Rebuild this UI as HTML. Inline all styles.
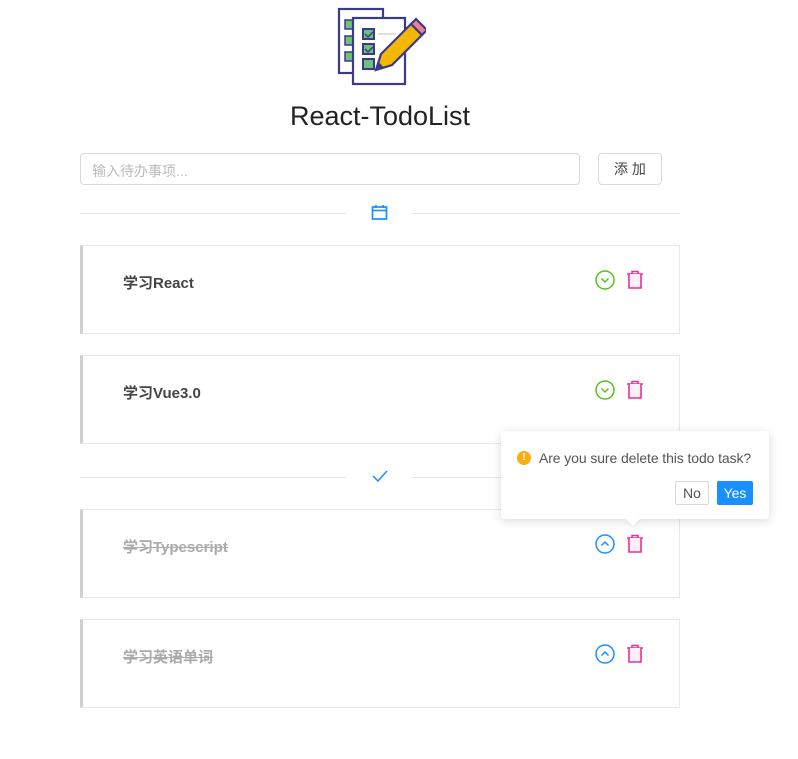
<!DOCTYPE html><html><head><meta charset="utf-8"><style>
body{margin:0;background:#fff;font-family:"Liberation Sans","Noto Sans CJK SC",sans-serif;width:798px;height:759px;position:relative;overflow:hidden}
.a{position:absolute}
.card{position:absolute;left:80px;width:596px;height:87px;border:1px solid #e8e8e8;border-left:3px solid #d0d0d0;}
.card .t{position:absolute;left:40px;top:26px;font-size:15px;font-weight:bold;color:#444}
.card.d .t{color:#aaa;text-decoration:line-through}
.ic{position:absolute;top:24px}
.line{position:absolute;height:1px;background:#e6e6e6}
</style></head><body>
<svg class="a" style="left:336px;top:6px" width="90" height="82" viewBox="0 0 90 82">
<rect x="3" y="3" width="44" height="64" fill="#fff" stroke="#3b3a8a" stroke-width="2.2"/>
<rect x="9" y="14" width="9" height="9" fill="#6cc27a" stroke="#3b3a8a" stroke-width="1.5"/><rect x="9" y="30" width="9" height="9" fill="#6cc27a" stroke="#3b3a8a" stroke-width="1.5"/><rect x="9" y="46" width="9" height="9" fill="#6cc27a" stroke="#3b3a8a" stroke-width="1.5"/>
<rect x="17" y="12" width="52" height="66" fill="#fff" stroke="#3b3a8a" stroke-width="2.2"/>
<rect x="27" y="23" width="11" height="10" fill="#6cc27a" stroke="#3b3a8a" stroke-width="2"/><rect x="27" y="38" width="11" height="10" fill="#6cc27a" stroke="#3b3a8a" stroke-width="2"/><rect x="27" y="53" width="11" height="10" fill="#6cc27a" stroke="#3b3a8a" stroke-width="2"/>
<path d="M29 28l3 3 5-5M29 43l3 3 5-5" stroke="#3b3a8a" fill="none" stroke-width="1.5"/>
<line x1="42" y1="28" x2="60" y2="28" stroke="#ddd" stroke-width="2"/>
<path d="M40 64l5-16 30-30 11 11-30 30z" fill="#f5b800" stroke="#3b3a8a" stroke-width="2.2"/>
<path d="M75 18l5-5 11 11-5 5z" fill="#e9848c" stroke="#3b3a8a" stroke-width="2.2"/>
<path d="M40 64l2.5-8 5.5 5.5z" fill="#3b3a8a"/>
</svg>
<div class="a" style="left:0;width:760px;top:101px;text-align:center;font-size:27px;color:#222">React-TodoList</div>
<div class="a" style="left:80px;top:153px;width:498px;height:30px;border:1px solid #d9d9d9;border-radius:4px"></div>
<div class="a" style="left:92px;top:161px;font-size:14px;color:#bbb">输入待办事项...</div>
<div class="a" style="left:598px;top:153px;width:62px;height:30px;border:1px solid #d9d9d9;border-radius:4px;font-size:14px;color:#444;text-align:center;line-height:30px">添 加</div>
<div class="line" style="left:80px;top:213px;width:267px"></div><div class="line" style="left:412px;top:213px;width:268px"></div>
<svg class="a" style="left:371px;top:204px" width="17" height="17"><rect x="1.5" y="3" width="14" height="12" fill="none" stroke="#1890ff" stroke-width="1.7"/><line x1="1.5" y1="6.5" x2="15.5" y2="6.5" stroke="#1890ff" stroke-width="1.6"/><path d="M5 1v3M12 1v3" stroke="#1890ff" stroke-width="1.6"/></svg>
<div class="line" style="left:80px;top:477px;width:267px"></div><div class="line" style="left:412px;top:477px;width:268px"></div>
<svg class="a" style="left:371px;top:469px" width="18" height="14"><path d="M2 7l5 5 9-10" fill="none" stroke="#1890ff" stroke-width="1.5"/></svg>
<div class="card" style="top:245px"><div class="t">学习React</div>
<svg class="ic" style="left:512px" width="20" height="20"><circle cx="10" cy="10" r="9" fill="none" stroke="#52c41a" stroke-width="1.5"/><path d="M6.5 8.5l3.5 3.5 3.5-3.5" fill="none" stroke="#52c41a" stroke-width="1.5"/></svg>
<svg class="ic" style="left:542px" width="20" height="20"><path d="M2 4h16M7 4V1.5h6V4" fill="none" stroke="#eb2f96" stroke-width="1.6"/><path d="M4 4v14h12V4" fill="#fff0f6" stroke="#eb2f96" stroke-width="1.6"/></svg></div>
<div class="card" style="top:355px"><div class="t">学习Vue3.0</div>
<svg class="ic" style="left:512px" width="20" height="20"><circle cx="10" cy="10" r="9" fill="none" stroke="#52c41a" stroke-width="1.5"/><path d="M6.5 8.5l3.5 3.5 3.5-3.5" fill="none" stroke="#52c41a" stroke-width="1.5"/></svg>
<svg class="ic" style="left:542px" width="20" height="20"><path d="M2 4h16M7 4V1.5h6V4" fill="none" stroke="#eb2f96" stroke-width="1.6"/><path d="M4 4v14h12V4" fill="#fff0f6" stroke="#eb2f96" stroke-width="1.6"/></svg></div>
<div class="card d" style="top:509px"><div class="t">学习Typescript</div>
<svg class="ic" style="left:512px" width="20" height="20"><circle cx="10" cy="10" r="9" fill="none" stroke="#1890ff" stroke-width="1.5"/><path d="M6.5 11.5l3.5-3.5 3.5 3.5" fill="none" stroke="#1890ff" stroke-width="1.5"/></svg>
<svg class="ic" style="left:542px" width="20" height="20"><path d="M2 4h16M7 4V1.5h6V4" fill="none" stroke="#eb2f96" stroke-width="1.6"/><path d="M4 4v14h12V4" fill="#fff0f6" stroke="#eb2f96" stroke-width="1.6"/></svg></div>
<div class="card d" style="top:619px"><div class="t">学习英语单词</div>
<svg class="ic" style="left:512px" width="20" height="20"><circle cx="10" cy="10" r="9" fill="none" stroke="#1890ff" stroke-width="1.5"/><path d="M6.5 11.5l3.5-3.5 3.5 3.5" fill="none" stroke="#1890ff" stroke-width="1.5"/></svg>
<svg class="ic" style="left:542px" width="20" height="20"><path d="M2 4h16M7 4V1.5h6V4" fill="none" stroke="#eb2f96" stroke-width="1.6"/><path d="M4 4v14h12V4" fill="#fff0f6" stroke="#eb2f96" stroke-width="1.6"/></svg></div>
<div class="a" style="left:501px;top:431px;width:268px;height:88px;background:#fff;border-radius:3px;box-shadow:0 2px 10px rgba(0,0,0,.15)"></div>
<div class="a" style="left:628px;top:514px;width:10px;height:10px;background:#fff;transform:rotate(45deg);box-shadow:2px 2px 4px rgba(0,0,0,.06)"></div>
<div class="a" style="left:517px;top:451px;width:14px;height:14px;border-radius:50%;background:#faad14;color:#fff;font-size:10px;font-weight:bold;text-align:center;line-height:14px">!</div>
<div class="a" style="left:539px;top:450px;font-size:14px;color:#555;letter-spacing:-0.1px">Are you sure delete this todo task?</div>
<div class="a" style="left:675px;top:481px;width:32px;height:22px;border:1px solid #d9d9d9;border-radius:2px;font-size:14px;color:#555;text-align:center;line-height:22px">No</div>
<div class="a" style="left:717px;top:481px;width:36px;height:24px;background:#1890ff;border-radius:2px;font-size:14px;color:#fff;text-align:center;line-height:24px">Yes</div>
</body></html>
